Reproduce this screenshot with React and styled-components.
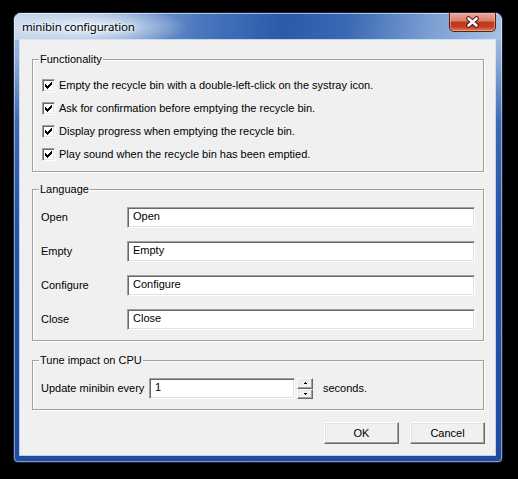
import React from "react";
import styled, { createGlobalStyle } from "styled-components";

const GlobalStyle = createGlobalStyle`
  html, body { margin: 0; padding: 0; background: #000; }
  body { width: 518px; height: 479px; overflow: hidden; }
  * { box-sizing: border-box; }
`;

const Desktop = styled.div`
  width: 518px;
  height: 479px;
  padding: 13px 0 0 14px;
  display: flex;
  align-items: flex-start;
  background: #000;
`;

const Window = styled.div`
  width: 488px;
  height: 449px;
  display: flex;
  flex-direction: column;
  border-radius: 7px 7px 4px 4px;
  background: linear-gradient(180deg, #b3c8e4 0px, #8eaed9 45px, #3c69b4 110px, #2453a6 220px, #1f4c9f 100%);
  box-shadow: inset 0 0 0 1px rgba(255, 255, 255, 0.45), 0 0 0 1px rgba(30, 40, 60, 0.9);
  overflow: hidden;
`;

const TitleBar = styled.div`
  height: 27px;
  display: flex;
  align-items: flex-start;
  padding-left: 8px;
  background:
    radial-gradient(ellipse 100px 20px at 75px 14px, rgba(238, 244, 251, 0.95), rgba(238, 244, 251, 0) 100%),
    linear-gradient(100deg, #c4d5ea 0%, #98b4dc 18%, #4a77bd 38%, #2b5aa8 55%, #3a68b3 68%, #7b9fd3 85%, #a9c2e3 100%);
  box-shadow: inset 0 1px 0 rgba(255, 255, 255, 0.55), inset 1px 0 0 rgba(255, 255, 255, 0.45), inset -1px 0 0 rgba(255, 255, 255, 0.45);
`;

const Title = styled.span`
  margin-top: 5px;
  font-family: "Noto Sans", "Open Sans", sans-serif;
  font-size: 11.5px;
  letter-spacing: -0.2px;
  line-height: 17px;
  color: #000;
  text-shadow: 0 0 6px rgba(255, 255, 255, 0.9), 0 0 3px rgba(255, 255, 255, 0.9);
`;

const CloseButton = styled.div`
  margin-left: auto;
  margin-right: 6px;
  width: 47px;
  height: 19px;
  display: flex;
  align-items: center;
  justify-content: center;
  border: 1px solid #5a1d14;
  border-top: none;
  border-radius: 0 0 5px 5px;
  background: linear-gradient(180deg, #e9aa9a 0%, #dc8069 42%, #c2371f 52%, #c23d22 75%, #de7c4f 100%);
  box-shadow: inset 0 0 0 1px rgba(255, 210, 190, 0.45);
`;

const Body = styled.div`
  flex: 1;
  display: flex;
  padding: 0 7px 7px 6px;
`;

const Client = styled.div`
  flex: 1;
  display: flex;
  flex-direction: column;
  align-items: stretch;
  padding: 13px 10px 0 12px;
  background: #f0f0f0;
  box-shadow: 0 0 0 1px rgba(220, 232, 245, 0.85);
  font-family: "Liberation Sans", Arial, sans-serif;
  font-size: 11px;
  color: #000;
`;

const GroupBox = styled.fieldset`
  margin: ${(p) => p.$top || 0}px 1px 0 0;
  padding: 0;
  height: ${(p) => p.$height}px;
  min-width: 0;
  border: 1px solid #a0a0a0;
  box-shadow: inset 1px 1px 0 #fff, 1px 1px 0 #fff;
`;

const Legend = styled.legend`
  margin-left: 6px;
  padding: 0 1px;
  font-size: 11px;
  line-height: 13px;
  height: 13px;
`;

const CheckList = styled.div`
  display: flex;
  flex-direction: column;
  gap: 10px;
  padding: 13px 0 0 9px;
`;

const CheckRow = styled.label`
  display: flex;
  align-items: center;
  height: 13px;
  gap: 4px;
  line-height: 13px;
  white-space: nowrap;
`;

const Box = styled.span`
  width: 13px;
  height: 13px;
  flex: none;
  display: flex;
  align-items: center;
  justify-content: center;
  background: #fff;
  border: 1px solid;
  border-color: #a0a0a0 #fff #fff #a0a0a0;
  box-shadow: inset 1px 1px 0 #696969, inset -1px -1px 0 #e3e3e3;
`;

const FieldGrid = styled.div`
  display: grid;
  grid-template-columns: 86px 1fr;
  row-gap: 13px;
  align-items: center;
  padding: 11px 8px 0 8px;
`;

const FieldLabel = styled.span`
  line-height: 13px;
`;

const TextBox = styled.div`
  height: ${(p) => p.$h || 21}px;
  width: ${(p) => (p.$w ? `${p.$w}px` : "auto")};
  display: flex;
  align-items: center;
  padding: 0 4px 2px 5px;
  background: #fff;
  border: 1px solid;
  border-color: #a0a0a0 #fff #fff #a0a0a0;
  box-shadow: inset 1px 1px 0 #696969, inset -1px -1px 0 #e3e3e3;
  line-height: 13px;
`;

const TuneRow = styled.div`
  display: flex;
  align-items: center;
  padding: 11px 8px 0 8px;
`;

const TuneLabel = styled.span`
  width: 108px;
  flex: none;
  line-height: 13px;
  white-space: nowrap;
`;

const Spinner = styled.div`
  width: 16px;
  height: 21px;
  margin-left: 2px;
  display: flex;
  flex-direction: column;
`;

const SpinButton = styled.div`
  flex: 1;
  display: flex;
  align-items: center;
  justify-content: center;
  background: #f0f0f0;
  border: 1px solid;
  border-color: #fff #696969 #696969 #fff;
  box-shadow: inset -1px -1px 0 #a0a0a0, inset 1px 1px 0 #e3e3e3;
`;

const Suffix = styled.span`
  margin-left: 10px;
  line-height: 13px;
`;

const ButtonRow = styled.div`
  display: flex;
  justify-content: flex-end;
  gap: 11px;
  margin-top: 12px;
`;

const PushButton = styled.div`
  width: 75px;
  height: 22px;
  display: flex;
  align-items: center;
  justify-content: center;
  background: #f0f0f0;
  border: 1px solid;
  border-color: #fff #696969 #696969 #fff;
  box-shadow: inset -1px -1px 0 #a0a0a0, inset 1px 1px 0 #e3e3e3;
  line-height: 13px;
`;

const CheckMark = () => (
  <svg width="7" height="7" viewBox="0 0 7 7" shapeRendering="crispEdges">
    <rect x="0" y="2" width="1" height="3" fill="#000" />
    <rect x="1" y="3" width="1" height="3" fill="#000" />
    <rect x="2" y="4" width="1" height="3" fill="#000" />
    <rect x="3" y="3" width="1" height="3" fill="#000" />
    <rect x="4" y="2" width="1" height="3" fill="#000" />
    <rect x="5" y="1" width="1" height="3" fill="#000" />
    <rect x="6" y="0" width="1" height="3" fill="#000" />
  </svg>
);

const CloseGlyph = () => (
  <svg width="15" height="12" viewBox="0 0 15 12">
    <path d="M3.5 2.5 L11.5 9.5 M11.5 2.5 L3.5 9.5" stroke="#4a1a12" strokeWidth="4.6" strokeLinecap="round" fill="none" />
    <path d="M3.5 2.5 L11.5 9.5 M11.5 2.5 L3.5 9.5" stroke="#fff" strokeWidth="2.6" strokeLinecap="round" fill="none" />
  </svg>
);

const Arrow = ({ up }) => (
  <svg width="5" height="3" viewBox="0 0 5 3" shapeRendering="crispEdges">
    {up ? (
      <>
        <rect x="2" y="0" width="1" height="1" fill="#000" />
        <rect x="1" y="1" width="3" height="1" fill="#000" />
      </>
    ) : (
      <>
        <rect x="1" y="1" width="3" height="1" fill="#000" />
        <rect x="2" y="2" width="1" height="1" fill="#000" />
      </>
    )}
  </svg>
);

const options = [
  "Empty the recycle bin with a double-left-click on the systray icon.",
  "Ask for confirmation before emptying the recycle bin.",
  "Display progress when emptying the recycle bin.",
  "Play sound when the recycle bin has been emptied.",
];

const fields = ["Open", "Empty", "Configure", "Close"];

export default function App() {
  return (
    <>
      <GlobalStyle />
      <Desktop>
        <Window>
          <TitleBar>
            <Title>minibin configuration</Title>
            <CloseButton>
              <CloseGlyph />
            </CloseButton>
          </TitleBar>
          <Body>
            <Client>
              <GroupBox $height={119}>
                <Legend>Functionality</Legend>
                <CheckList>
                  {options.map((o) => (
                    <CheckRow key={o}>
                      <Box>
                        <CheckMark />
                      </Box>
                      {o}
                    </CheckRow>
                  ))}
                </CheckList>
              </GroupBox>
              <GroupBox $top={11} $height={158}>
                <Legend>Language</Legend>
                <FieldGrid>
                  {fields.map((f) => (
                    <React.Fragment key={f}>
                      <FieldLabel>{f}</FieldLabel>
                      <TextBox>{f}</TextBox>
                    </React.Fragment>
                  ))}
                </FieldGrid>
              </GroupBox>
              <GroupBox $top={13} $height={56}>
                <Legend>Tune impact on CPU</Legend>
                <TuneRow>
                  <TuneLabel>Update minibin every</TuneLabel>
                  <TextBox $w={146}>1</TextBox>
                  <Spinner>
                    <SpinButton>
                      <Arrow up />
                    </SpinButton>
                    <SpinButton>
                      <Arrow />
                    </SpinButton>
                  </Spinner>
                  <Suffix>seconds.</Suffix>
                </TuneRow>
              </GroupBox>
              <ButtonRow>
                <PushButton>OK</PushButton>
                <PushButton>Cancel</PushButton>
              </ButtonRow>
            </Client>
          </Body>
        </Window>
      </Desktop>
    </>
  );
}
